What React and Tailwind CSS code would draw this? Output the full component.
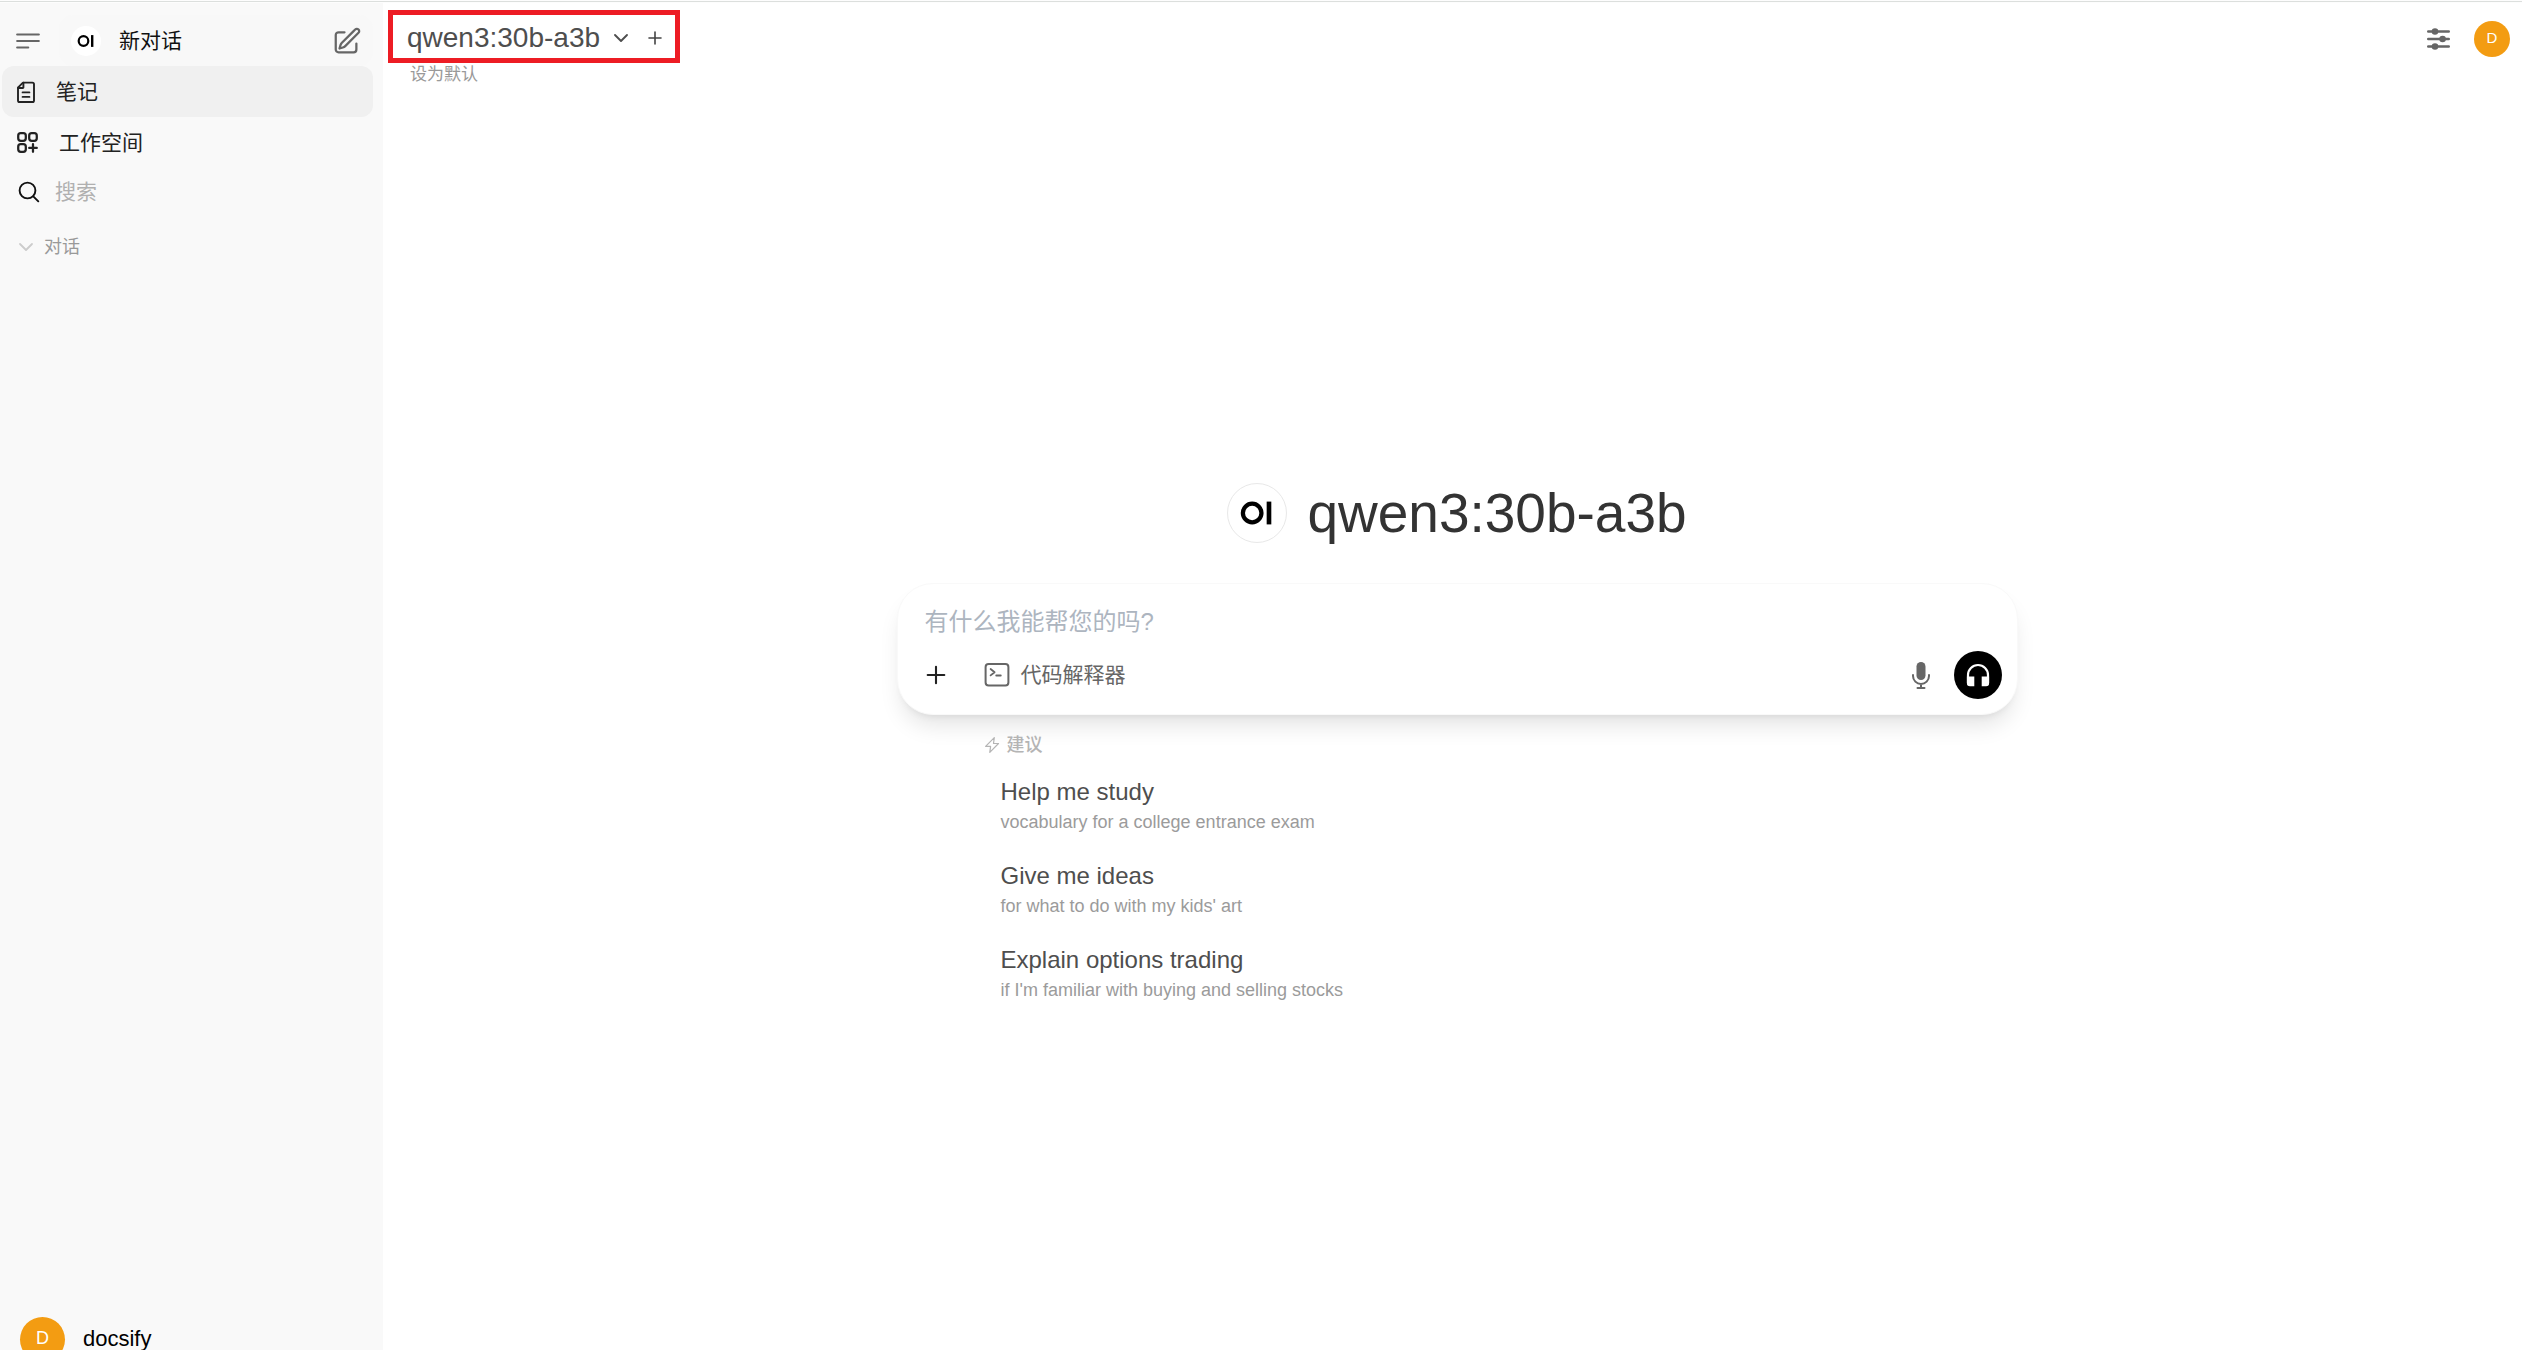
import React from "react";

const FONT = "font-['Liberation_Sans','Noto_Sans_CJK_SC',sans-serif]";

function Logo({ className }) {
  return (
    <svg viewBox="0 0 60 60" className={className} aria-hidden="true">
      <circle cx="25" cy="30" r="9.6" fill="none" stroke="#000" strokeWidth="4.4" />
      <rect x="40" y="18.2" width="4.8" height="23.6" fill="#000" />
    </svg>
  );
}

function Stroke({ className, width = 1.5, children, box = "0 0 24 24" }) {
  return (
    <svg
      viewBox={box}
      className={className}
      fill="none"
      stroke="currentColor"
      strokeWidth={width}
      strokeLinecap="round"
      strokeLinejoin="round"
      aria-hidden="true"
    >
      {children}
    </svg>
  );
}

function Sidebar() {
  return (
    <aside className="flex w-[383px] shrink-0 flex-col bg-[#f9f9f9] pr-[10px] pl-[2px] pt-[12px] text-[21px] leading-[30px] text-[#222]">
      <div className="flex h-[51px] items-center">
        <button type="button" aria-label="菜单" className="flex w-[57px] pl-[14px] text-[#666]">
          <Stroke box="0 0 24 18" className="h-[18px] w-[24px]" width={2.2}>
            <path d="M1.2 2.5h21.6M1.2 9h21.6M1.2 15.5h11" />
          </Stroke>
        </button>
        <button type="button" className="flex h-full flex-1 items-center rounded-[14px] bg-[#f8f8f8] pr-[11px] pl-[12px] text-[#111]">
          <span className="flex size-[30px] rounded-full bg-white">
            <Logo className="size-full" />
          </span>
          <span className="ml-[18px]">新对话</span>
          <Stroke className="ml-auto size-[30px] text-[#666]" width={1.8}>
            <path d="m16.862 4.487 1.687-1.688a1.875 1.875 0 1 1 2.652 2.652L10.582 16.07a4.5 4.5 0 0 1-1.897 1.13L6 18l.8-2.685a4.5 4.5 0 0 1 1.13-1.897l8.932-8.931ZM19.5 14v4.75A2.25 2.25 0 0 1 17.25 21H5.25A2.25 2.25 0 0 1 3 18.75V7.25A2.25 2.25 0 0 1 5.25 5H10" />
          </Stroke>
        </button>
      </div>
      <a href="#notes" className="flex h-[51px] items-center rounded-[12px] bg-[#f0f0f0] pl-[12px]">
        <Stroke className="size-[24px]" width={1.9}>
          <path d="M4 20.4V7.7a.6.6 0 0 1 .2-.4l4.5-4.5a.6.6 0 0 1 .4-.2h9.3a1.6 1.6 0 0 1 1.6 1.6v16.2a1.6 1.6 0 0 1-1.6 1.6H5.6A1.6 1.6 0 0 1 4 20.4Z" />
          <path d="M9.4 2.8v4.6a.6.6 0 0 1-.6.6H4.2M8.6 16.9h6.8M8.6 12.4h6.8" />
        </Stroke>
        <span className="ml-[18px]">笔记</span>
      </a>
      <a href="#workspace" className="flex h-[51px] items-center rounded-[12px] pl-[12px]">
        <Stroke className="size-[27px]" width={2}>
          <path d="M13.5 16.875h3.375m0 0h3.375m-3.375 0V13.5m0 3.375v3.375M6 10.5h2.25a2.25 2.25 0 0 0 2.25-2.25V6a2.25 2.25 0 0 0-2.25-2.25H6A2.25 2.25 0 0 0 3.75 6v2.25A2.25 2.25 0 0 0 6 10.5Zm0 9.75h2.25A2.25 2.25 0 0 0 10.5 18v-2.25a2.25 2.25 0 0 0-2.25-2.25H6a2.25 2.25 0 0 0-2.25 2.25V18A2.25 2.25 0 0 0 6 20.25Zm9.75-9.75H18a2.25 2.25 0 0 0 2.25-2.25V6A2.25 2.25 0 0 0 18 3.75h-2.25A2.25 2.25 0 0 0 13.5 6v2.25a2.25 2.25 0 0 0 2.25 2.25Z" />
        </Stroke>
        <span className="ml-[18px]">工作空间</span>
      </a>
      <label className="flex h-[48px] items-center pl-[16px]">
        <Stroke box="0 0 22 22" className="size-[22px] shrink-0 text-[#111]" width={1.9}>
          <circle cx="9.5" cy="9.5" r="7.9" />
          <path d="m15.3 15.3 5 5" />
        </Stroke>
        <input
          type="text"
          aria-label="搜索"
          placeholder="搜索"
          className="ml-[15px] w-full bg-transparent outline-none placeholder:text-[#b0b0b0]"
        />
      </label>
      <button type="button" className="mt-[13px] flex h-[36px] items-center pl-[15px] text-[18px] leading-[27px] text-[#999]">
        <Stroke box="0 0 18 18" className="size-[18px] text-[#ccc]" width={1.8}>
          <path d="m3 6 6 6 6-6" />
        </Stroke>
        <span className="ml-[9px]">对话</span>
      </button>
      <button type="button" className="mt-auto flex h-[33px] shrink-0 items-start pl-[18px] text-[22px] leading-[24px] text-black">
        <span className="flex size-[45px] shrink-0 items-center justify-center rounded-full bg-[#f39c12] pb-[3px] text-[18px] text-white">D</span>
        <span className="ml-[18px] pt-[10px]">docsify</span>
      </button>
    </aside>
  );
}

function Header() {
  return (
    <header className="flex items-start justify-between pt-[7px] pr-[12px] pl-[5px]">
      <div>
        <div className="flex h-[53px] items-center border-[5px] border-[#ed1c24] pr-[11px] pl-[14px] text-[#444]">
          <button type="button" className="flex items-center pt-[3px] text-[28px] leading-[36px] text-[#4e4e4e]">
            qwen3:30b-a3b
            <Stroke box="0 0 18 18" className="ml-[12px] size-[18px]" width={1.9}>
              <path d="m3 6 6 6 6-6" />
            </Stroke>
          </button>
          <button type="button" aria-label="添加模型" className="ml-[16px] pt-[3px]">
            <Stroke box="0 0 18 18" className="size-[18px]" width={1.6}>
              <path d="M9 3v12M3 9h12" />
            </Stroke>
          </button>
        </div>
        <button type="button" className="block pl-[22px] text-[17px] leading-[24px] text-[#999]">
          设为默认
        </button>
      </div>
      <div className="flex items-center gap-[22px] pt-[11px]">
        <button type="button" aria-label="对话高级设置">
          <svg viewBox="0 0 27 24" className="h-[24px] w-[27px] text-[#666]" fill="currentColor" stroke="currentColor" strokeWidth="2.4" strokeLinecap="round" aria-hidden="true">
            <path d="M3.2 4.5h20.6M3.2 12h20.6M3.2 19.5h20.6" />
            <circle cx="10" cy="4.5" r="3.3" stroke="none" />
            <circle cx="17.6" cy="12" r="3.3" stroke="none" />
            <circle cx="10" cy="19.5" r="3.3" stroke="none" />
          </svg>
        </button>
        <button type="button" className="flex size-[36px] items-center justify-center rounded-full bg-[#f39c12] pb-[2px] text-[15px] text-white">
          D
        </button>
      </div>
    </header>
  );
}

function Composer() {
  return (
    <form className="mt-[38px] flex w-full flex-col rounded-[36px] border border-[#f9f9f9] bg-white pt-[20px] pr-[15px] pb-[15px] pl-[27px] shadow-[0_15px_22px_-4px_rgba(0,0,0,0.1),0_6px_9px_-6px_rgba(0,0,0,0.1)]">
      <input
        type="text"
        aria-label="有什么我能帮您的吗？"
        placeholder="有什么我能帮您的吗?"
        className="h-[36px] w-full bg-transparent text-[24px] outline-none placeholder:text-[#adb5bf]"
      />
      <div className="mt-[11px] flex h-[48px] items-center">
        <button type="button" aria-label="更多" className="text-[#222]">
          <Stroke box="0 0 22 22" className="size-[22px]" width={2.1}>
            <path d="M11 2.7v16.6M2.7 11h16.6" />
          </Stroke>
        </button>
        <button type="button" className="ml-[37px] flex items-center text-[21px] text-[#666]">
          <Stroke box="0 0 27 27" className="size-[27px]" width={2}>
            <rect x="1.6" y="2.1" width="22.8" height="21.4" rx="3" />
            <path d="m6.6 7 4 3.2-4 3.2M12.2 13.5h4.6" strokeWidth="1.8" />
          </Stroke>
          <span className="ml-[10px]">代码解释器</span>
        </button>
        <button type="button" aria-label="录音" className="ml-auto text-[#666]">
          <svg viewBox="0 0 30 30" className="size-[30px]" fill="none" stroke="currentColor" strokeWidth="2" strokeLinecap="round" aria-hidden="true">
            <rect x="10.5" y="2" width="9" height="18" rx="4.5" fill="currentColor" stroke="none" />
            <path d="M7 15v1a8 8 0 0 0 16 0v-1M15 24v4M11.5 28h7" />
          </svg>
        </button>
        <button type="button" aria-label="语音通话" className="ml-[18px] flex size-[48px] items-center justify-center rounded-full bg-black text-white">
          <svg viewBox="0 0 24 24" className="size-[24px]" aria-hidden="true">
            <path d="M2 20V12a10 10 0 0 1 20 0v8" fill="none" stroke="currentColor" strokeWidth="2.2" />
            <path d="M.9 13.5h7.4v9.8H4a3.1 3.1 0 0 1-3.1-3.3zM15.7 13.5h7.4V20a3.1 3.1 0 0 1-3.1 3.3h-4.3z" fill="currentColor" />
          </svg>
        </button>
      </div>
    </form>
  );
}

const suggestions = [
  ["Help me study", "vocabulary for a college entrance exam"],
  ["Give me ideas", "for what to do with my kids' art"],
  ["Explain options trading", "if I'm familiar with buying and selling stocks"],
];

function Suggestions() {
  return (
    <section className="w-full pt-[16px] pl-[86px]">
      <h2 className="flex h-[28px] items-center text-[18px] font-medium text-[#b4b4b4]">
        <Stroke box="0 0 18 18" className="size-[18px]" width={1.2}>
          <path d="M11.3 1.6 2.6 10.4h5L6.8 16.4l8.7-8.9h-5z" />
        </Stroke>
        <span className="ml-[6px]">建议</span>
      </h2>
      <ul className="mt-[5px]">
        {suggestions.map(([title, text]) => (
          <li key={title}>
            <button type="button" className="block h-[84px] px-[18px] text-left">
              <span className="block text-[24px] leading-[32px] text-[#4e4e4e]">{title}</span>
              <span className="block text-[18px] leading-[28px] text-[#9b9b9b]">{text}</span>
            </button>
          </li>
        ))}
      </ul>
    </section>
  );
}

export default function App() {
  return (
    <div className={"flex h-screen flex-col overflow-hidden bg-white " + FONT}>
      <div className="h-[3px] shrink-0 bg-[#fdfdfd] pt-px">
        <div className="h-px bg-[#dcdfdd]" />
      </div>
      <div className="flex min-h-0 flex-1">
        <Sidebar />
        <div className="flex min-w-0 flex-1 flex-col">
          <Header />
          <main className="mx-auto flex w-full max-w-[1130px] flex-col items-center pt-[394px] pl-[9px]">
            <h1 className="flex items-center text-[55px] leading-[64px] text-[#333]">
              <span className="mr-[20px] flex size-[60px] rounded-full border border-[#e8e8e8]">
                <Logo className="size-full" />
              </span>
              qwen3:30b-a3b
            </h1>
            <Composer />
            <Suggestions />
          </main>
        </div>
      </div>
    </div>
  );
}
